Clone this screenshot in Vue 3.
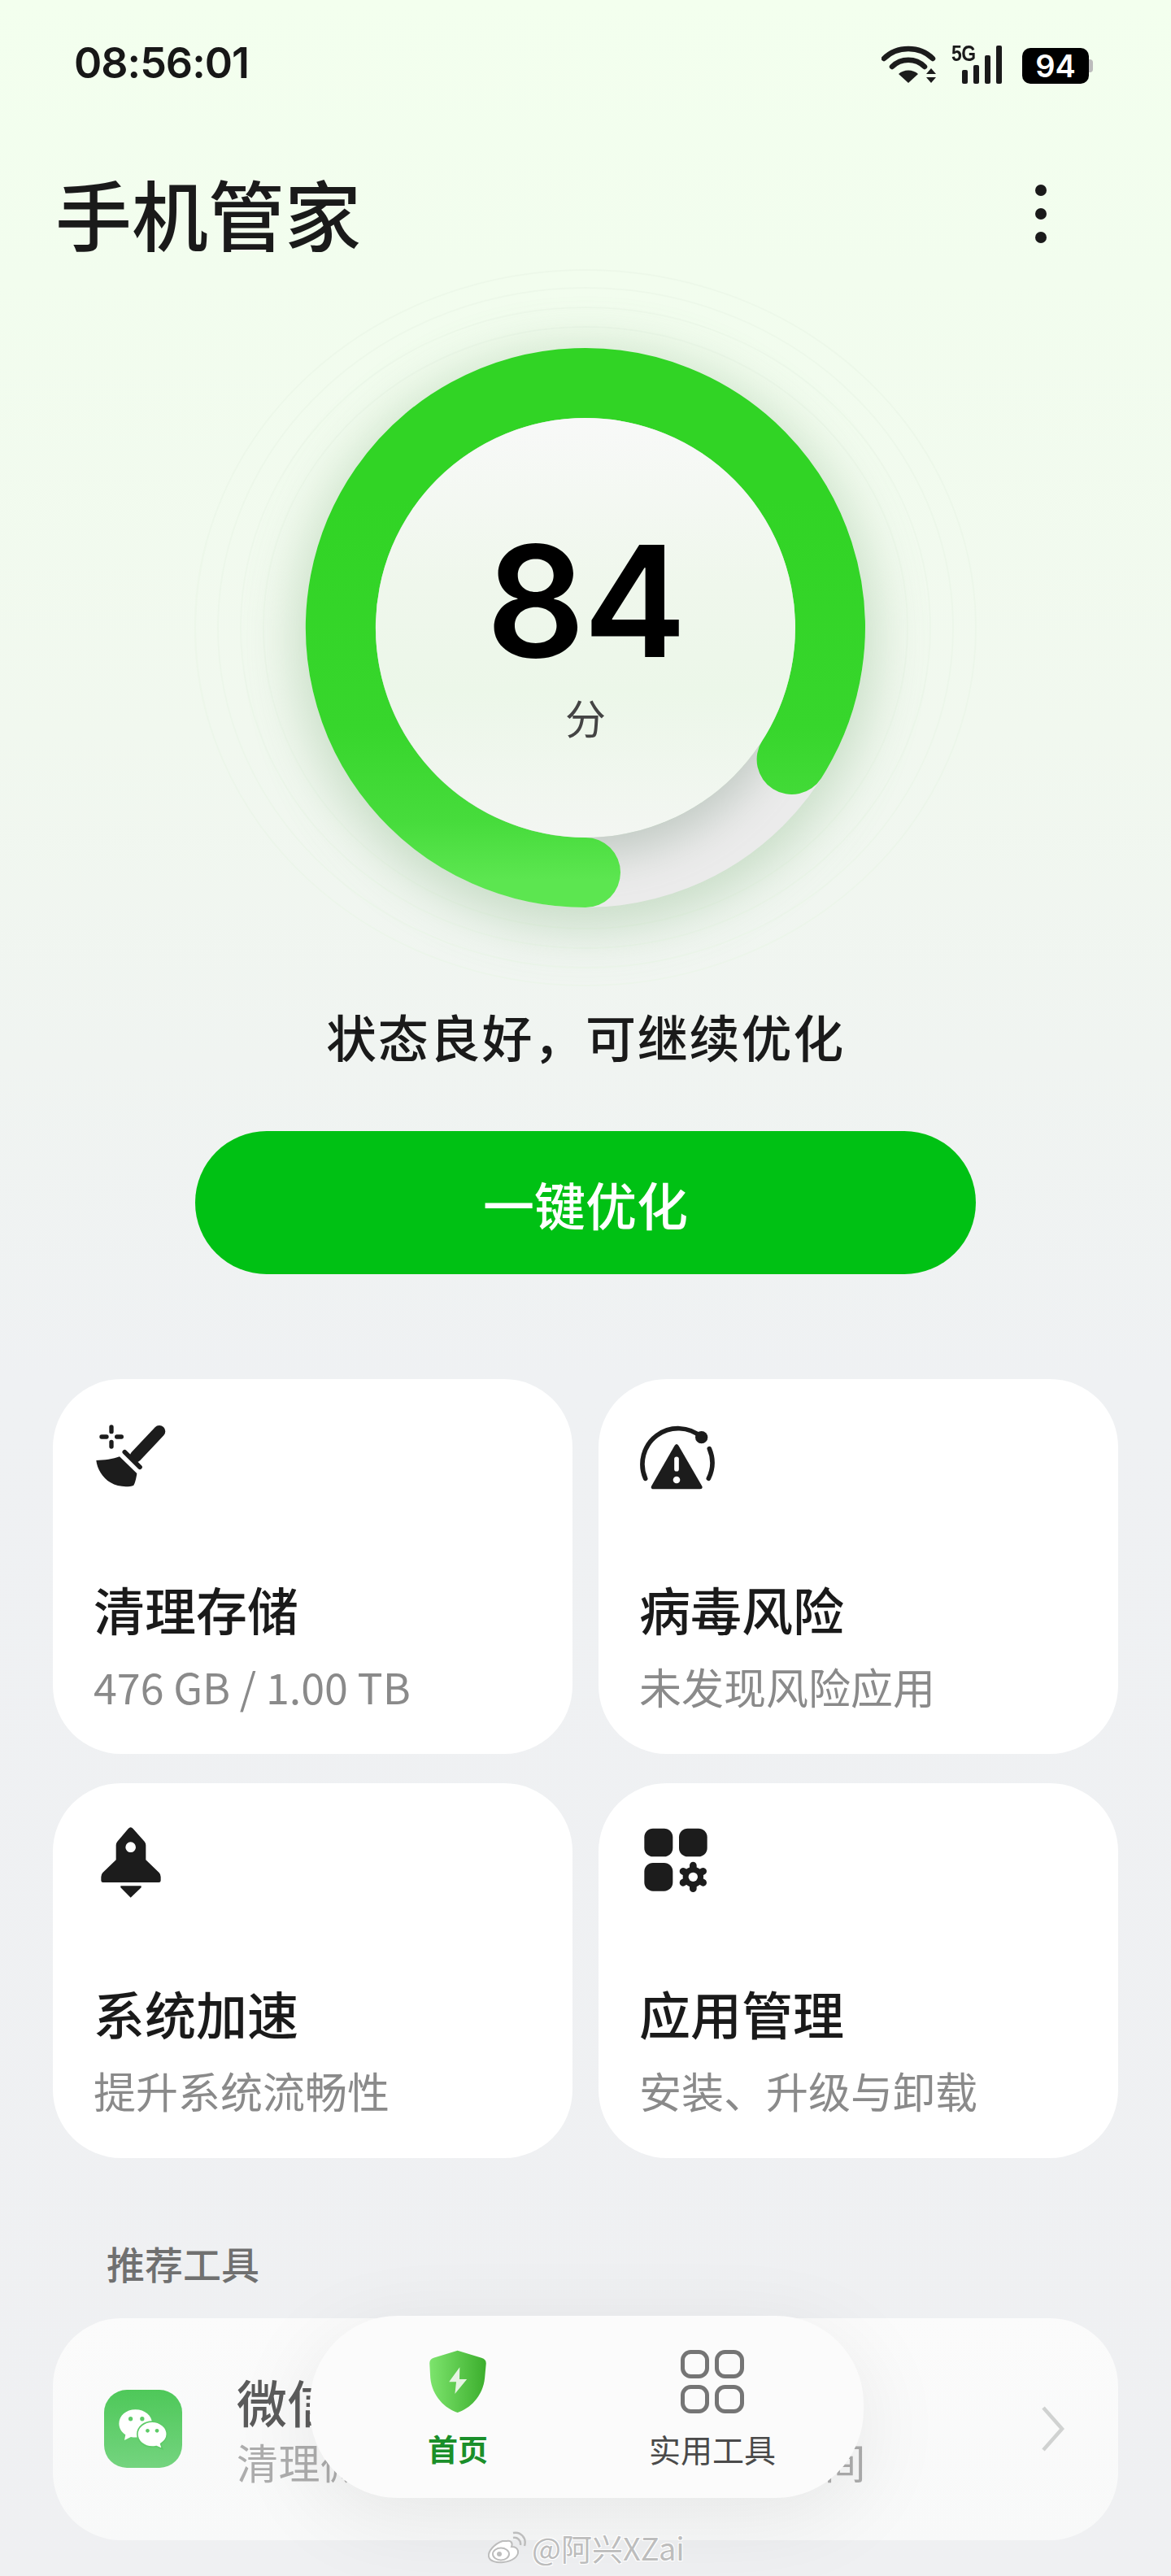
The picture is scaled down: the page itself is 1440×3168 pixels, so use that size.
<script setup>
const cards = [
  { icon: 'broom', title: '清理存储', sub: '476 GB / 1.00 TB' },
  { icon: 'risk', title: '病毒风险', sub: '未发现风险应用' },
  { icon: 'rocket', title: '系统加速', sub: '提升系统流畅性' },
  { icon: 'apps', title: '应用管理', sub: '安装、升级与卸载' }
]
</script>

<template>
  <div class="page">
    <header class="status">
      <span class="time">08:56:01</span>
      <div class="status-icons">
        <svg class="wifi" viewBox="0 0 68 48" width="68" height="48">
          <g fill="none" stroke="#1c1c1c" stroke-width="6.5">
            <path d="M3 17 C19 1 47 1 63 17" stroke-linecap="round" />
            <path d="M13 27 C24 16 42 16 53 27" stroke-linecap="round" />
          </g>
          <path d="M33 47 L21 36 C27 30 39 30 45 36 Z" fill="#1c1c1c" />
          <path d="M61 29 L67 36 L55 36 Z M55 40 L67 40 L61 47 Z" fill="#1c1c1c" />
        </svg>
        <div class="signal">
          <span class="five-g">5G</span>
          <i class="bar b1"></i><i class="bar b2"></i><i class="bar b3"></i><i class="bar b4"></i>
        </div>
        <div class="battery"><span>94</span><i></i></div>
      </div>
    </header>

    <div class="title-row">
      <h1>手机管家</h1>
      <div class="more"><i></i><i></i><i></i></div>
    </div>

    <section class="hero">
      <svg class="ring" viewBox="0 0 920 920" width="920" height="920">
        <defs>
          <linearGradient id="arc" gradientUnits="userSpaceOnUse" x1="460" y1="300" x2="460" y2="770">
            <stop offset="0" stop-color="#31d425" />
            <stop offset="0.6" stop-color="#37d62c" />
            <stop offset="0.85" stop-color="#47dc3c" />
            <stop offset="1" stop-color="#5ce650" />
          </linearGradient>
          <filter id="soft" x="-40%" y="-40%" width="180%" height="180%">
            <feGaussianBlur stdDeviation="32" />
          </filter>
          <filter id="softer" x="-40%" y="-40%" width="180%" height="180%">
            <feGaussianBlur stdDeviation="26" />
          </filter>
        </defs>
        <g fill="none" stroke="#e9f5e6" stroke-width="2" opacity="0.5">
          <ellipse cx="460" cy="460" rx="480" ry="440" />
          <ellipse cx="460" cy="460" rx="452" ry="418" />
          <ellipse cx="460" cy="460" rx="424" ry="394" />
          <ellipse cx="460" cy="460" rx="396" ry="370" />
        </g>
        <circle cx="460" cy="474" r="356" fill="#8fb98d" opacity="0.42" filter="url(#soft)" />
        <circle cx="460" cy="460" r="301" fill="none" stroke="#ebebeb" stroke-width="86" />
        <circle cx="464" cy="486" r="256" fill="#6f8a76" opacity="0.32" filter="url(#softer)" />
        <path d="M460 761 A301 301 0 1 1 713.6 622" fill="none" stroke="url(#arc)" stroke-width="86" stroke-linecap="round" />
      </svg>
      <div class="dial">
        <span class="score">84</span>
        <span class="unit">分</span>
      </div>
    </section>

    <p class="state">状态良好&#xFF0C;可继续优化</p>
    <button class="optimize">一键优化</button>

    <section class="cards">
      <article v-for="card in cards" :key="card.icon" class="card">
        <svg v-if="card.icon === 'broom'" class="icon" viewBox="150 170 300 260" width="100" height="86.67">
          <g stroke="#1c1c1c" stroke-linecap="round" fill="none">
            <path d="M228 197V214M228 252V269M192 233H210M248 233H265" stroke-width="16" />
            <path d="M405 213L318 305" stroke-width="44" />
            <path d="M277 289L333 345" stroke-width="17" />
          </g>
          <path d="M172 320C200 320 235 315 258 306L322 368C320 385 315 405 310 412C290 420 250 418 225 402C195 385 175 350 172 320Z" fill="#1c1c1c" />
        </svg>
        <svg v-else-if="card.icon === 'risk'" class="icon" viewBox="125 170 300 260" width="100" height="86.67">
          <g fill="none" stroke="#1c1c1c" stroke-width="17" stroke-linecap="round">
            <path d="M160 378A132 132 0 0 1 367 225" />
            <path d="M396 268A132 132 0 0 1 393 378" />
          </g>
          <circle cx="367" cy="226" r="23" fill="#1c1c1c" />
          <path d="M268 256Q275 246 282 256L369 406Q373 416 362 417H190Q178 416 182 406Z" fill="#1c1c1c" />
          <path d="M275 306V343" stroke="#fff" stroke-width="17" stroke-linecap="round" />
          <circle cx="275" cy="383" r="13" fill="#fff" />
        </svg>
        <svg v-else-if="card.icon === 'rocket'" class="icon rocket" viewBox="180 155 240 270" width="80" height="90">
          <path fill-rule="evenodd" d="M290 167Q299 157 308 167L350 214Q355 220 355 228V282L404 329Q410 335 410 345V358Q410 365 403 365H197Q190 365 190 358V345Q190 335 196 329L245 282V228Q245 220 250 214ZM299 216A19 19 0 1 0 299 254A19 19 0 1 0 299 216Z" fill="#1c1c1c" />
          <path d="M262 378H338V384L299 421L262 384Z" fill="#1c1c1c" />
        </svg>
        <svg v-else class="icon apps" viewBox="150 170 255 250" width="85" height="83.33">
          <rect x="160" y="178" width="105" height="104" rx="32" fill="#1c1c1c" />
          <rect x="288" y="178" width="104" height="104" rx="32" fill="#1c1c1c" />
          <rect x="160" y="305" width="105" height="104" rx="32" fill="#1c1c1c" />
          <g stroke="#1c1c1c" stroke-width="26" stroke-linecap="round">
            <path d="M340 314V400M303 336L377 378M303 378L377 336" />
          </g>
          <circle cx="340" cy="357" r="38" fill="#1c1c1c" />
          <circle cx="340" cy="357" r="17" fill="#fff" />
        </svg>
        <h2>{{ card.title }}</h2>
        <p>{{ card.sub }}</p>
      </article>
    </section>

    <h3 class="section-title">推荐工具</h3>

    <section class="tool">
      <div class="wechat">
        <svg viewBox="0 0 287 290" width="96" height="96">
          <path d="M115 73C80 73 54 96 54 125C54 142 63 157 78 167L74 187L98 175C104 176 110 177 116 177C150 177 177 154 177 125C177 96 150 73 115 73Z" fill="#fff" />
          <circle cx="97" cy="108" r="8" fill="#5ecb68" />
          <circle cx="140" cy="108" r="8" fill="#5ecb68" />
          <path d="M177 118C148 118 122 138 122 165C122 192 148 212 177 212C183 212 188 211 193 210L215 220L209 201C223 192 232 179 232 165C232 138 206 118 177 118Z" fill="#fff" stroke="#5ecb68" stroke-width="5" />
          <circle cx="160" cy="152" r="7" fill="#5ecb68" />
          <circle cx="195" cy="152" r="7" fill="#5ecb68" />
        </svg>
      </div>
      <div class="tool-text">
        <strong>微信清理</strong>
        <span>清理微信缓存文件&#xFF0C;释放更多空间</span>
      </div>
      <svg class="chevron" viewBox="0 0 30 56" width="30" height="56">
        <path d="M3 2L26 28L3 54" fill="none" stroke="#d0d2d1" stroke-width="4.5" />
      </svg>
    </section>

    <nav class="dock">
      <div class="tab active">
        <svg viewBox="140 82 222 244" width="74" height="81">
          <defs>
            <linearGradient id="shield" x1="0" y1="0" x2="1" y2="0">
              <stop offset="0" stop-color="#7de46d" />
              <stop offset="1" stop-color="#3cae2d" />
            </linearGradient>
          </defs>
          <path d="M250 87L340 115Q357 120 357 135L352 190C345 260 295 305 250 320C205 305 155 260 148 190L145 135Q145 120 160 115Z" fill="url(#shield)" />
          <path d="M258 150L218 205H245L240 250L285 195H257Z" fill="#e6f4e3" />
        </svg>
        <span>首页</span>
      </div>
      <div class="tab">
        <svg viewBox="0 0 80 80" width="80" height="80">
          <g fill="none" stroke="#757575" stroke-width="5">
            <rect x="3.5" y="3.5" width="30" height="30" rx="10" />
            <rect x="45.5" y="3.5" width="31" height="30" rx="10" />
            <rect x="3.5" y="46.5" width="30" height="30" rx="10" />
            <rect x="45.5" y="46.5" width="31" height="30" rx="10" />
          </g>
        </svg>
        <span>实用工具</span>
      </div>
    </nav>

    <footer class="mark">
      <svg viewBox="0 0 50 42" width="50" height="42">
        <path d="M20 13C9 17 2 26 3 32C4 38 13 40 21 39C32 38 40 32 39 25C38 21 34 20 31 20C33 15 30 12 25 13Z" fill="#fff" stroke="#bdbdbd" stroke-width="2" />
        <ellipse cx="18" cy="29" rx="10" ry="7.5" fill="#fff" stroke="#bdbdbd" stroke-width="2" />
        <circle cx="16" cy="29" r="3" fill="#bdbdbd" />
        <path d="M33 9C38 8 43 12 42 18M33 3C42 1 50 9 47 19" fill="none" stroke="#bdbdbd" stroke-width="2.5" />
      </svg>
      <span>@阿兴XZai</span>
    </footer>
  </div>
</template>

<style>
html, body { margin: 0; background: #eff0f2; }
</style>

<style scoped>
.page {
  position: relative;
  width: 1440px;
  height: 3168px;
  overflow: hidden;
  display: flex;
  flex-direction: column;
  font-family: "Noto Sans CJK SC", "Noto Sans", sans-serif;
  color: #1a1a1a;
  background: linear-gradient(180deg, #f3ffee 0, #f2fdee 340px, #f1f8ef 900px, #f0f4f1 1300px, #eff1f3 1700px, #eff0f2 3168px);
}
.status {
  height: 156px;
  padding: 0 101px 0 91px;
  display: flex;
  align-items: center;
  justify-content: space-between;
  box-sizing: border-box;
}
.time {
  font-family: Inter, "Liberation Sans", sans-serif;
  font-weight: 600;
  font-size: 52px;
  line-height: 60px;
  letter-spacing: -1px;
  color: #171717;
}
.status-icons {
  display: flex;
  align-items: flex-end;
  height: 48px;
  padding-top: 2px;
}
.wifi { margin-right: 18px; }
.signal {
  position: relative;
  width: 66px;
  height: 47px;
  margin-right: 21px;
  display: flex;
  align-items: flex-end;
  gap: 7px;
  padding-left: 13px;
  box-sizing: border-box;
}
.five-g {
  position: absolute;
  left: 0;
  top: -3px;
  font-family: "Liberation Sans", sans-serif;
  font-weight: 700;
  font-size: 27px;
  line-height: 26px;
  letter-spacing: -0.5px;
  transform: scaleX(0.85);
  transform-origin: left top;
  color: #1a1a1a;
}
.bar { width: 7px; background: #1a1a1a; border-radius: 2px; }
.b1 { height: 17px; }
.b2 { height: 23px; }
.b3 { height: 35px; }
.b4 { height: 47px; }
.battery {
  position: relative;
  width: 82px;
  height: 44px;
  background: #000;
  border-radius: 10px;
  color: #fff;
  font-family: Inter, "Liberation Sans", sans-serif;
  font-weight: 600;
  font-size: 38px;
  line-height: 44px;
  text-align: center;
}
.battery i {
  position: absolute;
  right: -5px;
  top: 14px;
  width: 5px;
  height: 16px;
  background: #bcbcbc;
  border-radius: 0 4px 4px 0;
}
.title-row {
  margin-top: 58px;
  height: 94px;
  margin-bottom: 4px;
  padding: 0 153px 0 68px;
  display: flex;
  align-items: center;
  justify-content: space-between;
}
h1 {
  margin: 0;
  font-size: 94px;
  line-height: 94px;
  font-weight: 500;
  color: #1a1a1a;
}
.more {
  display: flex;
  flex-direction: column;
  gap: 15px;
  margin-top: 4px;
}
.more i {
  width: 14px;
  height: 14px;
  background: #1a1a1a;
  border-radius: 50%;
}
.hero {
  height: 920px;
  display: grid;
  justify-items: center;
  align-items: center;
}
.ring {
  grid-area: 1 / 1;
  overflow: visible;
}
.dial {
  grid-area: 1 / 1;
  z-index: 1;
  width: 516px;
  height: 516px;
  border-radius: 50%;
  box-sizing: border-box;
  padding-top: 150px;
  display: flex;
  flex-direction: column;
  align-items: center;
  background: linear-gradient(180deg, #f8f9f8 0, #eff7ec 40%, #ecf7e9 65%, #f3f6f2 100%);
}
.score {
  font-family: Inter, "Liberation Sans", sans-serif;
  font-weight: 600;
  font-size: 190px;
  line-height: 150px;
  letter-spacing: -2px;
  color: #000;
}
.unit {
  margin-top: 42px;
  font-size: 50px;
  line-height: 50px;
  color: #444;
}
.state {
  margin: -2px 0 2px;
  height: 88px;
  text-align: center;
  font-size: 62px;
  line-height: 88px;
  font-weight: 500;
  letter-spacing: 1.8px;
  color: #1a1a1a;
}
.optimize {
  margin: 71px auto 0;
  width: 960px;
  height: 176px;
  border: 0;
  border-radius: 88px;
  background: #00c114;
  color: #fff;
  font-family: inherit;
  font-size: 63px;
  font-weight: 500;
}
.cards {
  margin: 129px 65px 0;
  display: grid;
  grid-template-columns: 639px 639px;
  column-gap: 32px;
  row-gap: 36px;
}
.card {
  position: relative;
  height: 461px;
  box-sizing: border-box;
  padding: 0 0 0 50px;
  background: #fff;
  border-radius: 84px;
  display: flex;
  flex-direction: column;
}
.icon {
  position: absolute;
  left: 46px;
  top: 50px;
}
.icon.rocket { left: 56px; top: 52px; }
.icon.apps { left: 53px; top: 53px; }
.card:nth-child(2) .icon { top: 53px; }
.card h2 {
  margin: 237px 0 0;
  font-size: 63px;
  line-height: 90px;
  font-weight: 500;
  color: #1a1a1a;
}
.card p {
  margin: 6px 0 0;
  font-size: 52px;
  line-height: 90px;
  font-weight: 400;
  color: #8a8a8a;
}
.section-title {
  margin: 99px 0 4px 131px;
  height: 60px;
  font-size: 47px;
  line-height: 60px;
  font-weight: 500;
  color: #707070;
}
.tool {
  margin: 34px 65px 0;
  height: 273px;
  border-radius: 84px;
  background: linear-gradient(180deg, #fbfbfb 0, #f8f9f9 100%);
  display: flex;
  align-items: flex-start;
  box-sizing: border-box;
  padding: 88px 65px 0 63px;
}
.wechat {
  width: 96px;
  height: 96px;
  border-radius: 28px;
  background: linear-gradient(180deg, #4ec859 0, #74d47f 100%);
  flex: none;
}
.wechat svg { display: block; }
.tool-text {
  margin: -26px 0 0 67px;
  display: flex;
  flex-direction: column;
  flex: 1;
}
.tool-text strong {
  font-size: 62px;
  line-height: 80px;
  font-weight: 500;
  color: #5b5b5b;
}
.tool-text span {
  margin-top: 4px;
  font-size: 51px;
  line-height: 60px;
  letter-spacing: 0.6px;
  color: #adadad;
}
.chevron { margin-top: 20px; flex: none; }
.dock {
  position: absolute;
  left: 381px;
  top: 2848px;
  width: 681px;
  height: 224px;
  border-radius: 108px;
  background: #fbfbfb;
  box-shadow: 0 24px 110px rgba(0, 0, 0, 0.08);
  display: flex;
  box-sizing: border-box;
  padding: 41px 0 0 0;
}
.tab {
  width: 262px;
  display: flex;
  flex-direction: column;
  align-items: center;
  font-size: 39px;
  line-height: 46px;
  color: #4a4a4a;
}
.tab svg { display: block; height: 80px; }
.tab span { margin-top: 19px; }
.tab.active { color: #1a8f2a; font-weight: 700; width: 364px; }
.tab.active span { font-size: 37px; }
.mark {
  position: absolute;
  left: 598px;
  top: 3112px;
  display: flex;
  align-items: center;
  gap: 6px;
  font-size: 38px;
  line-height: 42px;
  color: #bdbdbd;
  text-shadow: 1px 1px 0 #fff, -1px 1px 0 #fff, 1px -1px 0 #fff, -1px -1px 0 #fff;
}
</style>
